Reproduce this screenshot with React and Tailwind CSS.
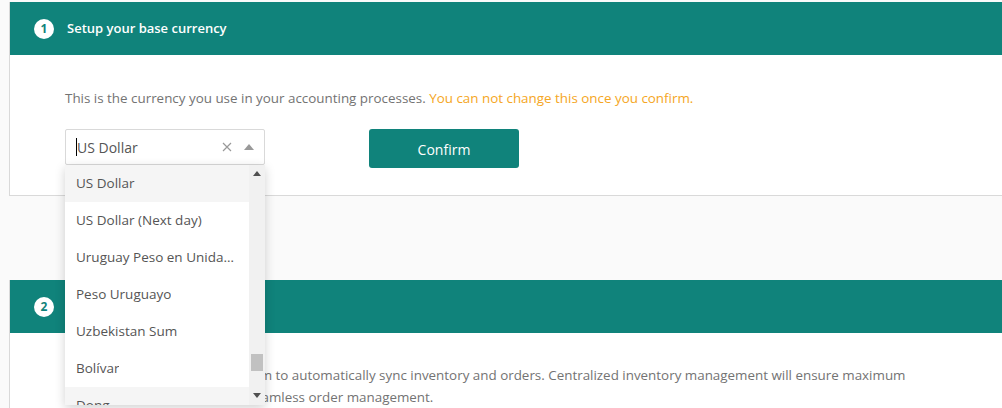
import { useState } from 'react';

const options = [
  'US Dollar',
  'US Dollar (Next day)',
  'Uruguay Peso en Unidades Indexadas',
  'Peso Uruguayo',
  'Uzbekistan Sum',
  'Bolívar',
  'Dong',
  'Vatu',
];

function StepHeader({ num, title }) {
  return (
    <div className="h-[53px] bg-[#10837b] flex items-center pl-[24px]">
      <div className="w-[20px] h-[20px] rounded-full bg-white text-[#10837b] text-[12px] font-bold flex items-center justify-center">
        {num}
      </div>
      <div className="ml-[13px] text-white text-[13px] font-semibold">{title}</div>
    </div>
  );
}

function CurrencySelect() {
  const [value] = useState('US Dollar');
  return (
    <div className="relative w-[200px]">
      <div className="h-[36px] border border-[#d9d9d9] rounded-[2px] bg-white flex items-center pl-[10px] pr-[10px]">
        <span className="w-px h-[18px] bg-black" />
        <span className="text-[14px] text-[#555] flex-1">{value}</span>
        <svg width="10" height="10" viewBox="0 0 10 10" className="mr-[12px]">
          <path d="M1 1 L9 9 M9 1 L1 9" stroke="#999" strokeWidth="1.2" />
        </svg>
        <svg width="10" height="6" viewBox="0 0 10 6">
          <path d="M0 6 L5 0 L10 6 Z" fill="#999" />
        </svg>
      </div>

      <div className="absolute left-0 top-[36px] w-[200px] h-[240px] bg-white shadow-[0_3px_10px_rgba(0,0,0,0.18)] flex overflow-hidden z-10">
        <div className="flex-1 min-w-0">
          {options.map((opt, i) => (
            <div
              key={opt}
              className={`h-[37px] flex items-center pl-[11px] pr-[14px] text-[13.5px] text-[#555] ${
                i === 0 || i === 6 ? 'bg-[#f5f5f5]' : 'bg-white'
              }`}
            >
              <span className="truncate min-w-0">{opt}</span>
            </div>
          ))}
        </div>
        <div className="w-[16px] bg-[#f1f1f1] relative">
          <svg width="8" height="5" viewBox="0 0 8 5" className="absolute left-[4px] top-[6px]">
            <path d="M0 5 L4 0 L8 5 Z" fill="#505050" />
          </svg>
          <div className="absolute left-[2px] top-[189px] w-[12px] h-[17px] bg-[#c1c1c1]" />
          <svg width="8" height="5" viewBox="0 0 8 5" className="absolute left-[4px] top-[228px]">
            <path d="M0 0 L4 5 L8 0 Z" fill="#505050" />
          </svg>
        </div>
      </div>
    </div>
  );
}

export default function App() {
  return (
    <div
      className="w-[1002px] h-[408px] overflow-hidden bg-[#fafafa] pl-[9px] pt-[2px]"
      style={{ fontFamily: '"Open Sans", Lato, sans-serif' }}
    >
      <div className="w-[1010px] bg-white border-l border-b border-[#d9d9d9]">
        <StepHeader num="1" title="Setup your base currency" />
        <div className="pt-[33px] pb-[27px] pl-[55px]">
          <p className="text-[13.4px] leading-[20px] text-[#737373]">
            This is the currency you use in your accounting processes.{' '}
            <span className="text-[#f5a623]">You can not change this once you confirm.</span>
          </p>
          <div className="mt-[21px] flex items-start">
            <CurrencySelect />
            <button className="ml-[104px] w-[150px] h-[39px] pt-[2px] bg-[#10837b] rounded-[3px] text-white text-[14px]">
              Confirm
            </button>
          </div>
        </div>
      </div>

      <div className="mt-[84px] w-[1010px] bg-white border-l border-[#d9d9d9]">
        <StepHeader num="2" title="Connect your sales channels" />
        <div className="pt-[31px] pl-[55px]">
          <p className="text-[13.4px] leading-[22px] text-[#737373] w-[860px]">
            Connect your site to the platform to automatically sync inventory and orders. Centralized inventory management will ensure maximum
            efficiency across all sites and seamless order management.
          </p>
        </div>
      </div>
    </div>
  );
}
